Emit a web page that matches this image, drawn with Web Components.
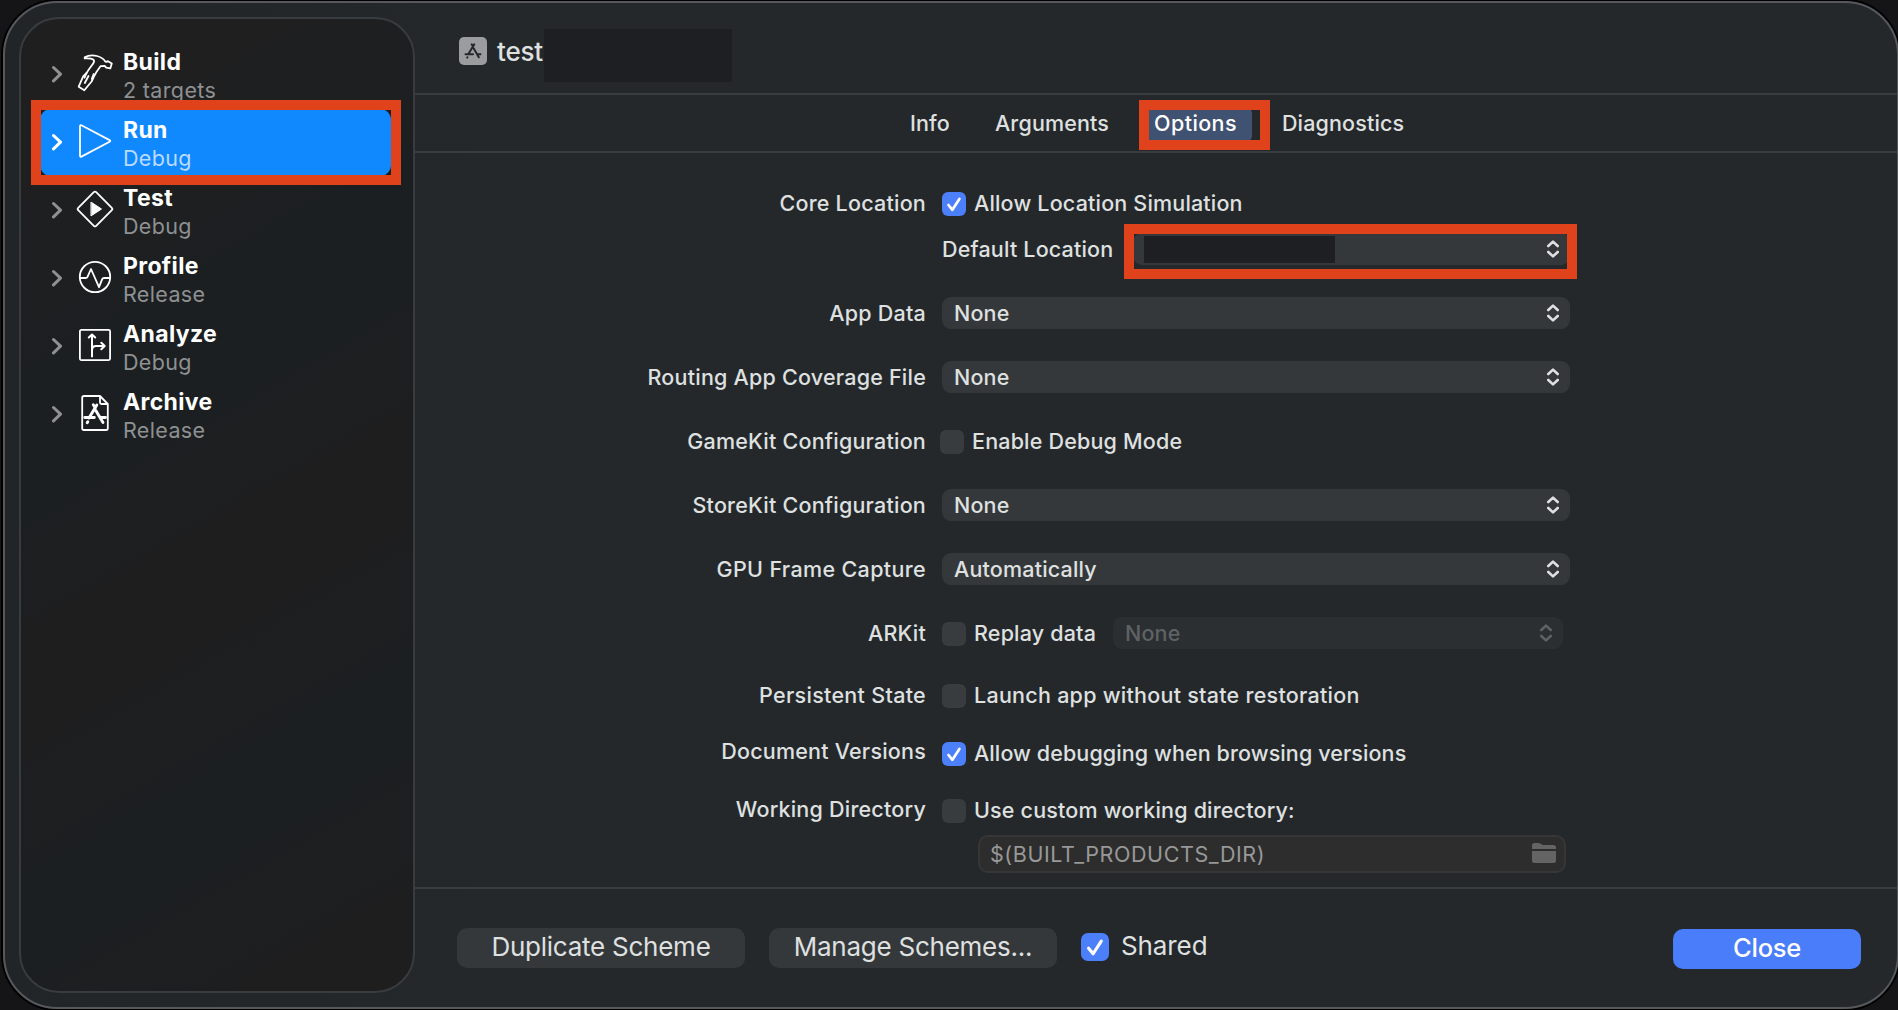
<!DOCTYPE html>
<html lang="en">
<head>
<meta charset="utf-8">
<title>Scheme Editor</title>
<style>
  html, body { height: 100%; }
  body {
    margin: 0;
    overflow: hidden;
    background: #151517;
    font-family: Inter, "Liberation Sans", sans-serif;
    color: #dfe0e0;
  }
</style>
</head>
<body>
<scheme-editor></scheme-editor>

<script>
// Small helper: every component is just a shadow root with static markup.
const define = (name, markup) => {
  customElements.define(name, class extends HTMLElement {
    constructor() {
      super();
      this.attachShadow({ mode: "open" });
    }
    connectedCallback() {
      this.shadowRoot.innerHTML = typeof markup === "function" ? markup(this) : markup;
    }
  });
};

const icons = {
  hammer: `<path d="M9.700 4.300C13 2.400 18 2 22 3c4 1 6.500 2.800 8.300 5.500l1.300.3 1.400-.6 3.800 2.300-1.500 4.900-4.100-.8-1.500-1.700-4.200.3c-3 3.800-5.300 7.300-7 11.300l-1.900 4-7.300 8.800-5.600-3.600 4.600-10.500 3.300-3.200c1.900-3.300 4-6 6.700-9.600 2-3.300.5-5.500-8.600-5z"/><path d="M11.500 20.200l-2 4.500M16.800 25.800l1.900-4.800M13.500 23L9.800 30"/>`,
  play: `<path d="M5 5.200c0-1 .6-1.300 1.400-.9l28.200 14.800c.9.500.9 1.100 0 1.600L6.400 35.600c-.8.400-1.400 0-1.400-.8z"/>`,
  test: `<path d="M18.800 3.200q1.200-1.200 2.400 0l15.600 15.600q1.200 1.200 0 2.400L21.200 36.800q-1.200 1.200-2.400 0L3.200 21.200q-1.200-1.200 0-2.400z"/><path d="M16.300 13.300L26.500 20l-10.200 6.700z" fill="currentColor" stroke-width="1"/>`,
  profile: `<circle cx="20" cy="20" r="15.200"/><path d="M5 21h5.500q1.500 0 2-1.200L16 12l8 18.200 3.200-8q.5-1.200 1.800-1.200h6"/>`,
  analyze: `<rect x="4.900" y="4.900" width="30.200" height="30.200" rx="1.500"/><path d="M17 31.500V10M13.800 12.500L17 9.500l3.200 3M17 25q.3-4 4-4h8M26.300 17.700l3.400 3.300-3.400 3.300" stroke-width="2"/>`,
  archive: `<path d="M25 3H9Q7.200 3 7.200 4.800v30.400Q7.200 37 9 37h22q1.800 0 1.800-1.800V11zM25 3v6.500q0 1.500 1.500 1.500h6.300"/><path d="M9.800 24.500h9.500M25.500 24.500h5M21.800 12l-7.800 13M12.800 28.700l-.6 1M18.300 11.800l2 3.200M20.800 17.500L28 29.500" stroke-width="2.900"/>`
};

define("scheme-editor", `
  <style>
    :host {
      display: flex;
      box-sizing: border-box;
      width: 1896px;
      height: 1008px;
      margin: 1px 0 0 3px;
      border: 2px solid #56585c;
      border-radius: 54px;
      background: linear-gradient(90deg, #212528, #25282b 480px);
      box-shadow: 0 0 0 2px #000;
    }
    main { flex: 1; display: flex; flex-direction: column; min-width: 0; }
    header {
      display: flex;
      align-items: center;
      box-sizing: border-box;
      height: 90px;
      padding: 10px 0 0 44px;
    }
    header svg { width: 28px; height: 28px; margin-bottom: 4px; }
    header span { margin: 0 1px 2px 10px; font-size: 26px; font-weight: 500; letter-spacing: -.2px; line-height: 30px; }
    header i { width: 188px; height: 53px; margin-top: 5px; background: #1e1f23; }
    nav, form, footer { border-top: 2px solid #393c3f; }
    nav { display: flex; height: 56px; padding-left: 495px; font-size: 21.5px; font-weight: 500; letter-spacing: .15px; line-height: 56px; }
    nav span { margin-right: 45px; }
    form { height: 736px; box-sizing: border-box; padding-top: 26px; }
    footer { display: flex; align-items: flex-start; padding: 39px 36px 0 42px; font-size: 26px; letter-spacing: -.1px; }
    footer settings-check { margin: 4px 0 0 24px; }
    footer push-button + push-button { margin-left: 24px; }
    footer [primary] { margin: 1px 0 0 auto; }
  </style>
  <scheme-sidebar>
    <scheme-item icon="hammer" name="Build">2 targets</scheme-item>
    <scheme-item icon="play" name="Run" selected>Debug</scheme-item>
    <scheme-item icon="test" name="Test">Debug</scheme-item>
    <scheme-item icon="profile" name="Profile">Release</scheme-item>
    <scheme-item icon="analyze" name="Analyze">Debug</scheme-item>
    <scheme-item icon="archive" name="Archive">Release</scheme-item>
  </scheme-sidebar>
  <main>
    <header>
      <svg viewBox="0 0 28 28" fill="none" stroke="#25282b" stroke-width="2" stroke-linecap="round">
        <rect width="28" height="28" rx="5" fill="#9b9c9e" stroke="none"/>
        <path d="M6.500 17.300h7.500M18.500 17.300h3M15.300 7.300l-5.900 9.700M8.400 20.200l-.2.400M12.700 7.300l1.300 2.300M14.600 11.300l5.200 9"/>
      </svg>
      <span>test</span><i></i>
    </header>
    <nav>
      <span>Info</span>
      <span>Arguments</span>
      <active-tab>Options</active-tab>
      <span>Diagnostics</span>
    </nav>
    <form>
      <settings-row label="Core Location" style="height:50px;--lift:2px">
        <settings-check checked>Allow Location Simulation</settings-check>
      </settings-row>
      <settings-row style="width:1155px;height:40px;margin-bottom:12px">
        <span>Default Location</span>
        <popup-button marked></popup-button>
      </settings-row>
      <settings-row label="App Data"><popup-button>None</popup-button></settings-row>
      <settings-row label="Routing App Coverage File"><popup-button>None</popup-button></settings-row>
      <settings-row label="GameKit Configuration">
        <settings-check style="margin:2px 0 0 -2px">Enable Debug Mode</settings-check>
      </settings-row>
      <settings-row label="StoreKit Configuration"><popup-button>None</popup-button></settings-row>
      <settings-row label="GPU Frame Capture" style="--label-spacing:.35px"><popup-button>Automatically</popup-button></settings-row>
      <settings-row label="ARKit">
        <settings-check style="width:171px;margin-top:2px">Replay data</settings-check>
        <popup-button disabled style="width:450px">None</popup-button>
      </settings-row>
      <settings-row label="Persistent State" style="height:62px;--lift:2px;--label-spacing:.3px">
        <settings-check style="letter-spacing:.26px">Launch app without state restoration</settings-check>
      </settings-row>
      <settings-row label="Document Versions" style="height:54px;--lift:6px">
        <settings-check checked style="letter-spacing:.1px">Allow debugging when browsing versions</settings-check>
      </settings-row>
      <settings-row label="Working Directory" style="height:44px;margin-top:8px;--lift:4px">
        <settings-check>Use custom working directory:</settings-check>
      </settings-row>
      <path-field>$(BUILT_PRODUCTS_DIR)</path-field>
    </form>
    <footer>
      <push-button>Duplicate Scheme</push-button>
      <push-button>Manage Schemes...</push-button>
      <settings-check checked large>Shared</settings-check>
      <push-button primary>Close</push-button>
    </footer>
  </main>
`);

define("scheme-sidebar", `
  <style>
    :host {
      display: block;
      box-sizing: border-box;
      flex: none;
      width: 396px;
      margin: 14px 0;
      margin-left: 14px;
      padding-top: 22px;
      border: 2px solid #383c3f;
      border-radius: 40px;
      background: linear-gradient(150deg, #1f1f20 12%, #1c1f21 30%, #1c1f21 42%, #1e1e1f 52%, #1e1e1f 60%, #1b1f21 76%, #1e1e1f 92%);
    }
  </style>
  <slot></slot>
`);

define("scheme-item", el => `
  <style>
    :host { position: relative; display: flex; height: 68px; color: #fff; }
    .fill { position: absolute; inset: 0 22px 1px 19px; border-radius: 11px; background: #1089ff; }
    .mark { position: absolute; left: 10px; top: -9px; width: 370px; height: 85px; box-sizing: border-box; border: 10px solid #e0431b; z-index: 2; }
    svg { position: relative; fill: none; stroke: currentColor; stroke-linecap: round; stroke-linejoin: round; }
    .chevron { width: 12px; height: 18px; margin: 24px 0 0 30px; color: ${el.hasAttribute("selected") ? "#fff" : "#8e9091"}; stroke-width: 3; }
    .icon { width: 40px; height: 40px; margin: 12px 0 0 12px; stroke-width: 1.8; }
    .text { position: relative; margin: 7px 0 0 8px; line-height: 28px; }
    b { display: block; font-size: 23px; font-weight: 700; letter-spacing: .35px; }
    .sub { font-size: 21.5px; letter-spacing: .35px; color: ${el.hasAttribute("selected") ? "#b9dbff" : "#8e9192"}; }
  </style>
  ${el.hasAttribute("selected") ? `<div class="fill"></div><div class="mark"></div>` : ""}
  <svg class="chevron" viewBox="0 0 12 18"><path d="M2.500 2.500L9.500 9.200l-7 6.700"/></svg>
  <svg class="icon" viewBox="0 0 40 40">${icons[el.getAttribute("icon")]}</svg>
  <div class="text"><b>${el.getAttribute("name")}</b><div class="sub"><slot></slot></div></div>
`);

define("active-tab", `
  <style>
    :host { position: relative; display: block; margin-right: 45px; color: #fff; letter-spacing: .4px; }
    .fill { position: absolute; left: -8px; top: 12px; width: 106px; height: 35px; border-radius: 6px; background: #3f5272; }
    .mark { position: absolute; left: -15px; top: 5px; width: 131px; height: 50px; box-sizing: border-box; border: 10px solid #e0431b; }
    span { position: relative; }
  </style>
  <div class="fill"></div><div class="mark"></div><span><slot></slot></span>
`);

define("settings-row", el => `
  <style>
    :host { display: flex; align-items: center; height: 64px; font-size: 21.5px; font-weight: 500; letter-spacing: .18px; line-height: 28px; white-space: nowrap; }
    .label { flex: none; width: 511px; margin-right: 16px; padding-bottom: var(--lift, 0); text-align: right; letter-spacing: var(--label-spacing, .22px); }
  </style>
  <div class="label">${el.getAttribute("label") || ""}</div>
  <slot></slot>
`);

define("settings-check", el => {
  const size = el.hasAttribute("large") ? 28 : 24;
  const checked = el.hasAttribute("checked");
  return `
  <style>
    :host { display: flex; align-items: center; white-space: nowrap; }
    svg { width: ${size}px; height: ${size}px; margin-right: ${size === 28 ? 12 : 8}px; flex: none; }
    span { line-height: 28px; margin-bottom: 2px; }
  </style>
  <svg viewBox="0 0 24 24">
    <rect width="24" height="24" rx="6" fill="${checked ? "#4c7ffa" : "#393c3e"}"/>
    ${checked ? `<path d="M6.500 13l3.900 4.800L17.400 7" fill="none" stroke="#fff" stroke-width="2.700" stroke-linecap="round" stroke-linejoin="round"/>` : ""}
  </svg>
  <span><slot></slot></span>`;
});

define("popup-button", el => `
  <style>
    :host {
      position: relative;
      display: flex;
      align-items: center;
      justify-content: space-between;
      box-sizing: border-box;
      width: 628px;
      height: 32px;
      padding: 0 11px 0 12px;
      border-radius: 9px;
      background: #35383a;
    }
    :host([marked]) { width: 437px; margin-left: auto; }
    :host([disabled]) { background: #2c2f32; color: #5f6264; }
    svg { width: 12px; height: 18px; fill: none; stroke: currentColor; stroke-width: 2.600; stroke-linecap: round; stroke-linejoin: round; }
    .mark { position: absolute; left: -9px; top: -9px; width: 453px; height: 55px; box-sizing: border-box; border: 10px solid #e0431b; }
    .hidden { position: absolute; left: 11px; top: 3px; width: 191px; height: 27px; background: #1e1f23; }
  </style>
  <span><slot></slot></span>
  <svg viewBox="0 0 12 18"><path d="M1.300 6L6 1.600 10.700 6M1.300 12L6 16.400 10.700 12"/></svg>
  ${el.hasAttribute("marked") ? `<div class="hidden"></div><div class="mark"></div>` : ""}
`);

define("path-field", `
  <style>
    :host {
      display: flex;
      align-items: center;
      justify-content: space-between;
      box-sizing: border-box;
      width: 588px;
      height: 38px;
      margin: 2px 0 0 563px;
      padding: 0 8px 0 10px;
      border: 2px solid #363636;
      border-radius: 10px;
      background: #2d2d2d;
      color: #989898;
      font-size: 21.5px;
      letter-spacing: .57px;
    }
    svg { width: 24px; height: 20px; margin-top: -2px; fill: #646464; }
  </style>
  <span><slot></slot></span>
  <svg viewBox="0 0 24 20"><path d="M0 6V2.500Q0 0 2.500 0h4Q8 0 9 1t2.500 1h10Q24 2 24 4.500V6zM0 8h24v9.500q0 2.500-2.500 2.500h-19Q0 20 0 17.500z"/></svg>
`);

define("push-button", `
  <style>
    :host { display: block; width: 288px; height: 40px; border-radius: 10px; background: #35383a; text-align: center; font-size: 26px; line-height: 37px; letter-spacing: -.25px; }
    :host([primary]) { width: 188px; background: #4a7dfa; color: #fff; font-size: 25.5px; font-weight: 500; }
  </style>
  <slot></slot>
`);
</script>
</body>
</html>
